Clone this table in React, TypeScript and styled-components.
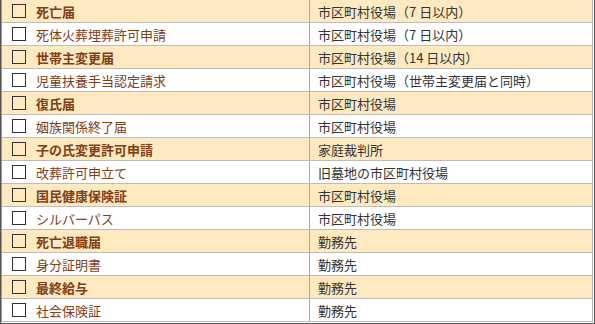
import React from 'react';
import styled, { createGlobalStyle } from 'styled-components';

const GlobalStyle = createGlobalStyle`
  html, body {
    margin: 0;
    padding: 0;
    background: #ffffff;
  }
  body {
    font-family: "Noto Sans CJK JP", "Noto Sans", sans-serif;
  }
`;

const Frame = styled.div`
  width: 595px;
  height: 324px;
  box-sizing: border-box;
  border-left: 1px solid #555;
  border-right: 1px solid #555;
  border-bottom: 1px solid #555;
  padding-right: 1px;
  padding-bottom: 1px;
  background: #fff;
`;

const List = styled.div`
  display: flex;
  flex-direction: column;
  border-left: 1px solid #9a9a9a;
  border-right: 1px solid #b5b5b5;
`;

const Row = styled.div<{ $hl: boolean }>`
  display: grid;
  grid-template-columns: 308px 1fr;
  height: 22px;
  border-bottom: 1px solid #bcbcbc;
  background: ${(p) => (p.$hl ? '#fee9c0' : '#ffffff')};
`;

const NameCell = styled.div<{ $hl: boolean }>`
  display: flex;
  align-items: center;
  gap: 10px;
  padding-left: 10px;
  border-right: 1px solid #a8a8a8;
  color: #7e4016;
  font-size: 13px;
  font-weight: ${(p) => (p.$hl ? 700 : 400)};
  white-space: nowrap;
`;

const Box = styled.span`
  width: 14px;
  height: 14px;
  box-sizing: border-box;
  border: 1.5px solid #333;
  flex-shrink: 0;
`;

const PlaceCell = styled.div`
  display: flex;
  align-items: center;
  padding-left: 8px;
  color: #333;
  font-size: 13px;
  white-space: nowrap;
`;

const items: [string, string, boolean][] = [
  ['死亡届', '市区町村役場（7 日以内）', true],
  ['死体火葬埋葬許可申請', '市区町村役場（7 日以内）', false],
  ['世帯主変更届', '市区町村役場（14 日以内）', true],
  ['児童扶養手当認定請求', '市区町村役場（世帯主変更届と同時）', false],
  ['復氏届', '市区町村役場', true],
  ['姻族関係終了届', '市区町村役場', false],
  ['子の氏変更許可申請', '家庭裁判所', true],
  ['改葬許可申立て', '旧墓地の市区町村役場', false],
  ['国民健康保険証', '市区町村役場', true],
  ['シルバーパス', '市区町村役場', false],
  ['死亡退職届', '勤務先', true],
  ['身分証明書', '勤務先', false],
  ['最終給与', '勤務先', true],
  ['社会保険証', '勤務先', false],
];

export default function App() {
  return (
    <>
      <GlobalStyle />
      <Frame>
        <List>
          {items.map(([name, place, hl]) => (
            <Row key={name} $hl={hl}>
              <NameCell $hl={hl}>
                <Box />
                {name}
              </NameCell>
              <PlaceCell>{place}</PlaceCell>
            </Row>
          ))}
        </List>
      </Frame>
    </>
  );
}
